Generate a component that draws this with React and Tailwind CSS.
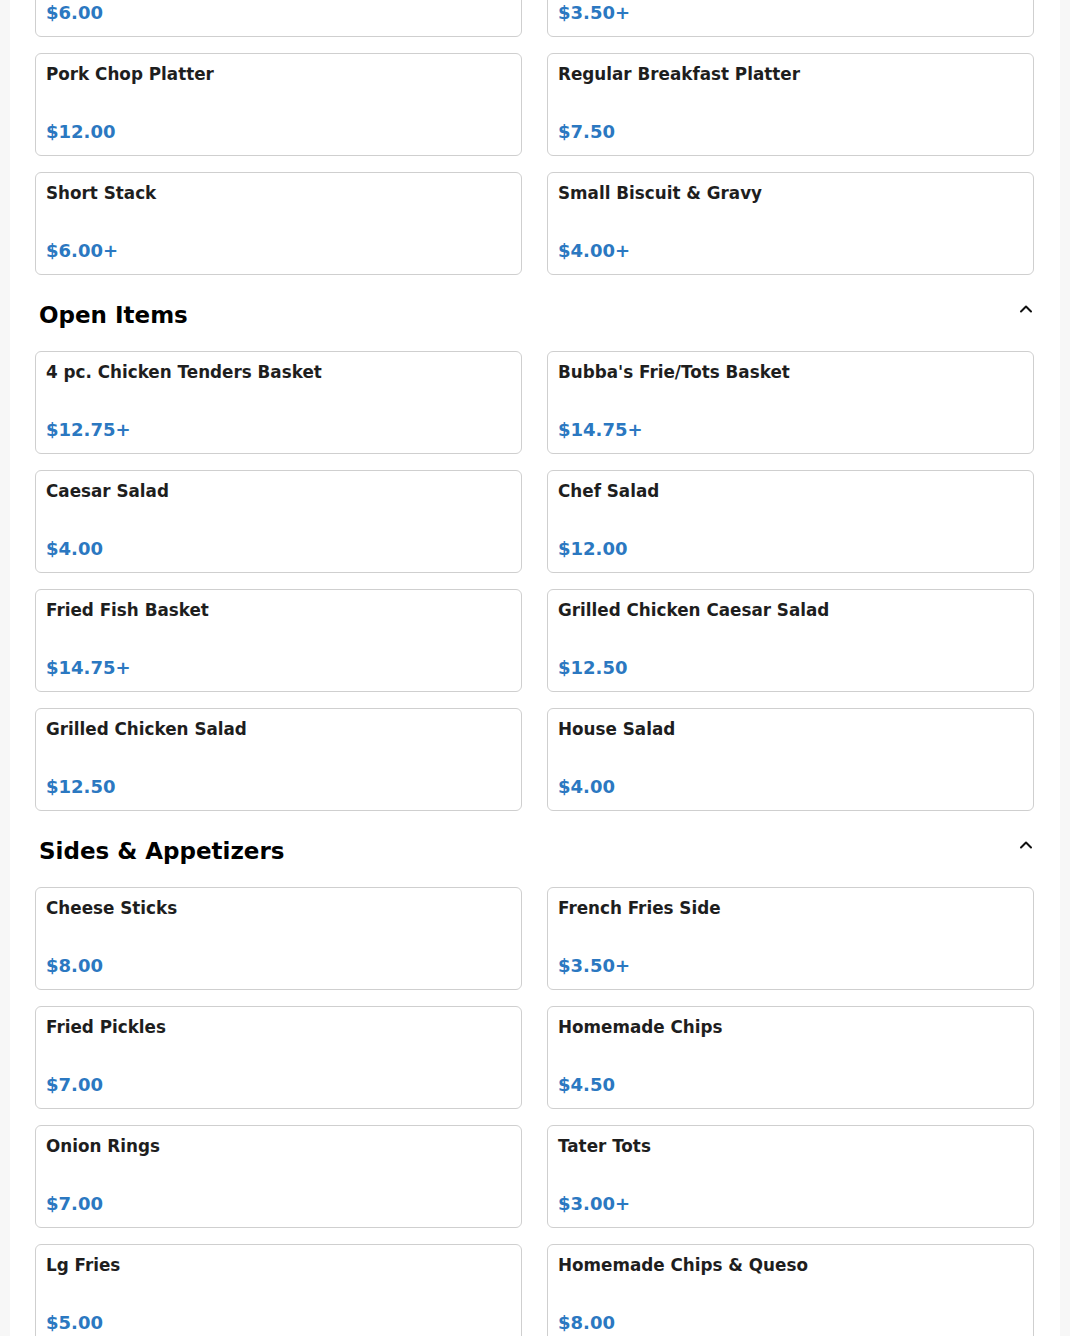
import React from 'react';

const sections = [
  {
    title: null,
    items: [
      { name: 'Pancake Platter', price: '$6.00' },
      { name: 'Pancake', price: '$3.50+' },
      { name: 'Pork Chop Platter', price: '$12.00' },
      { name: 'Regular Breakfast Platter', price: '$7.50' },
      { name: 'Short Stack', price: '$6.00+' },
      { name: 'Small Biscuit & Gravy', price: '$4.00+' },
    ],
  },
  {
    title: 'Open Items',
    items: [
      { name: '4 pc. Chicken Tenders Basket', price: '$12.75+' },
      { name: "Bubba's Frie/Tots Basket", price: '$14.75+' },
      { name: 'Caesar Salad', price: '$4.00' },
      { name: 'Chef Salad', price: '$12.00' },
      { name: 'Fried Fish Basket', price: '$14.75+' },
      { name: 'Grilled Chicken Caesar Salad', price: '$12.50' },
      { name: 'Grilled Chicken Salad', price: '$12.50' },
      { name: 'House Salad', price: '$4.00' },
    ],
  },
  {
    title: 'Sides & Appetizers',
    items: [
      { name: 'Cheese Sticks', price: '$8.00' },
      { name: 'French Fries Side', price: '$3.50+' },
      { name: 'Fried Pickles', price: '$7.00' },
      { name: 'Homemade Chips', price: '$4.50' },
      { name: 'Onion Rings', price: '$7.00' },
      { name: 'Tater Tots', price: '$3.00+' },
      { name: 'Lg Fries', price: '$5.00' },
      { name: 'Homemade Chips & Queso', price: '$8.00' },
    ],
  },
];

function ChevronUp() {
  return (
    <svg width="16" height="16" viewBox="0 0 16 16" fill="none" stroke="#111" strokeWidth="2" strokeLinecap="round" strokeLinejoin="round">
      <path d="M3 10.5 L8 5.5 L13 10.5" />
    </svg>
  );
}

function ItemCard({ item }) {
  return (
    <div className="h-[103px] flex flex-col justify-between border border-[#cfcfcf] rounded-md bg-white px-[10px] pt-[8px] pb-[11px]">
      <p className="text-[16.8px] leading-[24px] font-bold text-[#1e1e1e]">{item.name}</p>
      <p className="text-[18px] leading-[24px] font-bold text-[#2b78c1]">{item.price}</p>
    </div>
  );
}

export default function App() {
  return (
    <div className="w-full h-[1336px] overflow-hidden bg-[#f7f7f7] px-[10px]" style={{ fontFamily: '"DejaVu Sans", Verdana, sans-serif' }}>
      <div className="bg-white h-[1336px] overflow-hidden flow-root pl-[25px] pr-[26px]">
        {/* page is scrolled: first row is only partly visible */}
        <div className="-mt-[66px]">
          {sections.map((section, i) => (
            <section key={i}>
              {section.title ? (
                <div className="flex justify-between items-center mt-[25px] mb-[21px] pl-[4px]">
                  <h2 className="text-[23px] leading-[30px] font-bold text-black">{section.title}</h2>
                  <span className="-mt-[12px]"><ChevronUp /></span>
                </div>
              ) : null}
              <div className="grid grid-cols-2 gap-x-[25px] gap-y-[16px]">
                {section.items.map(item => (
                  <ItemCard key={item.name} item={item} />
                ))}
              </div>
            </section>
          ))}
        </div>
      </div>
    </div>
  );
}
